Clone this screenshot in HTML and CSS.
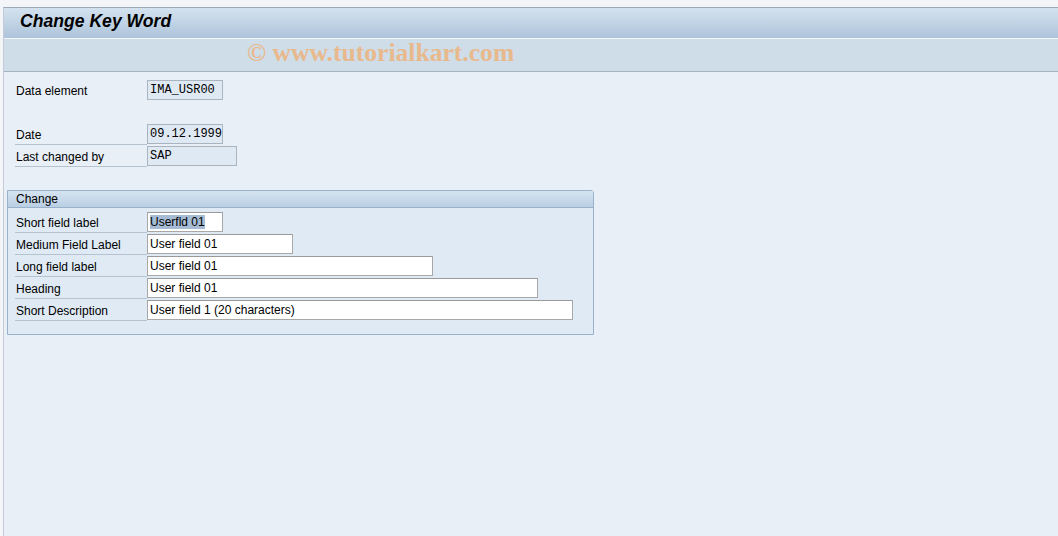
FILE: index.html
```html
<!DOCTYPE html>
<html lang="en">
<head>
    <meta charset="UTF-8">
    <title>Change Key Word</title>
    <link rel="stylesheet" href="styles.css">
</head>
<body>
<div class="frame">
    <div class="title-bar">Change Key Word</div>
    <div class="toolbar">
        <span class="watermark">&copy; www.tutorialkart.com</span>
    </div>

    <div class="content">
        <div class="head-fields">
            <div class="row">
                <span class="label plain">Data element</span>
                <span class="out mono w76">IMA_USR00</span>
            </div>
            <div class="row"></div>
            <div class="row">
                <span class="label">Date</span>
                <span class="out mono w76">09.12.1999</span>
            </div>
            <div class="row">
                <span class="label">Last changed by</span>
                <span class="out mono w90">SAP</span>
            </div>
        </div>

        <div class="group">
            <div class="group-head">Change</div>
            <div class="group-body">
                <div class="row">
                    <span class="label">Short field label</span>
                    <span class="inp w76"><span class="selected">Userfld 01</span></span>
                </div>
                <div class="row">
                    <span class="label">Medium Field Label</span>
                    <span class="inp w146">User field 01</span>
                </div>
                <div class="row">
                    <span class="label">Long field label</span>
                    <span class="inp w286">User field 01</span>
                </div>
                <div class="row">
                    <span class="label">Heading</span>
                    <span class="inp w391">User field 01</span>
                </div>
                <div class="row">
                    <span class="label">Short Description</span>
                    <span class="inp w426">User field 1 (20 characters)</span>
                </div>
            </div>
        </div>
    </div>
</div>
</body>
</html>
```

FILE: styles.css
```css
html, body {
    margin: 0;
    height: 100%;
}
body {
    background: #f3f5f9;
    font-family: "Liberation Sans", Arial, sans-serif;
    font-size: 12px;
    color: #000;
    overflow: hidden;
}

.frame {
    margin: 7px 0 0 3px;
    height: calc(100% - 7px);
    border-top: 1px solid #9ea7b6;
    border-left: 1px solid #c3ccd6;
    background: #e8eff7;
    box-sizing: border-box;
}

.title-bar {
    height: 30px;
    padding-left: 16px;
    line-height: 27px;
    font-size: 17.6px;
    font-weight: bold;
    font-style: italic;
    background: linear-gradient(#d4e2ef, #adc4db);
    border-bottom: 1px solid #f4f7fa;
}

.toolbar {
    height: 32px;
    padding-left: 243px;
    background: #cfdde8;
    border-bottom: 1px solid #a6b1c1;
}
.watermark {
    font-family: "Liberation Serif", "Times New Roman", serif;
    font-weight: bold;
    font-size: 25.6px;
    line-height: 28px;
    color: #e8b98d;
}

.content {
    padding: 7px 0 0 3px;
}
.head-fields {
    padding-left: 8px;
}

.row {
    display: flex;
    align-items: center;
    height: 22px;
}
.label {
    width: 132px;
    padding-left: 1px;
    height: 21px;
    line-height: 22px;
    box-sizing: border-box;
    border-bottom: 1px solid #b5c2cf;
}
.label.plain {
    border-bottom-color: transparent;
}

.out, .inp {
    height: 20px;
    line-height: 19px;
    padding-left: 2px;
    box-sizing: border-box;
    white-space: nowrap;
    overflow: hidden;
}
.out {
    background: #dfe9f3;
    border: 1px solid #a9b4bf;
}
.mono {
    font-family: "Liberation Mono", "Courier New", monospace;
    font-size: 12px;
}
.inp {
    background: #fff;
    border: 1px solid #a8a8a8;
    border-top-color: #9a9a9a;
}
.selected {
    background: #a6bcd5;
}

.w76 { width: 76px; }
.w90 { width: 90px; }
.w146 { width: 146px; }
.w286 { width: 286px; }
.w391 { width: 391px; }
.w426 { width: 426px; }

.group {
    margin-top: 23px;
    width: 587px;
    box-sizing: border-box;
    border: 1px solid #98b2cb;
    border-top-right-radius: 3px;
    background: #dfeaf4;
}
.group-head {
    height: 16px;
    line-height: 16px;
    padding-left: 8px;
    background: linear-gradient(#d6e4f1, #bacfe4);
    border-bottom: 1px solid #98b2cb;
}
.group-body {
    padding: 3px 0 13px 7px;
}
```
